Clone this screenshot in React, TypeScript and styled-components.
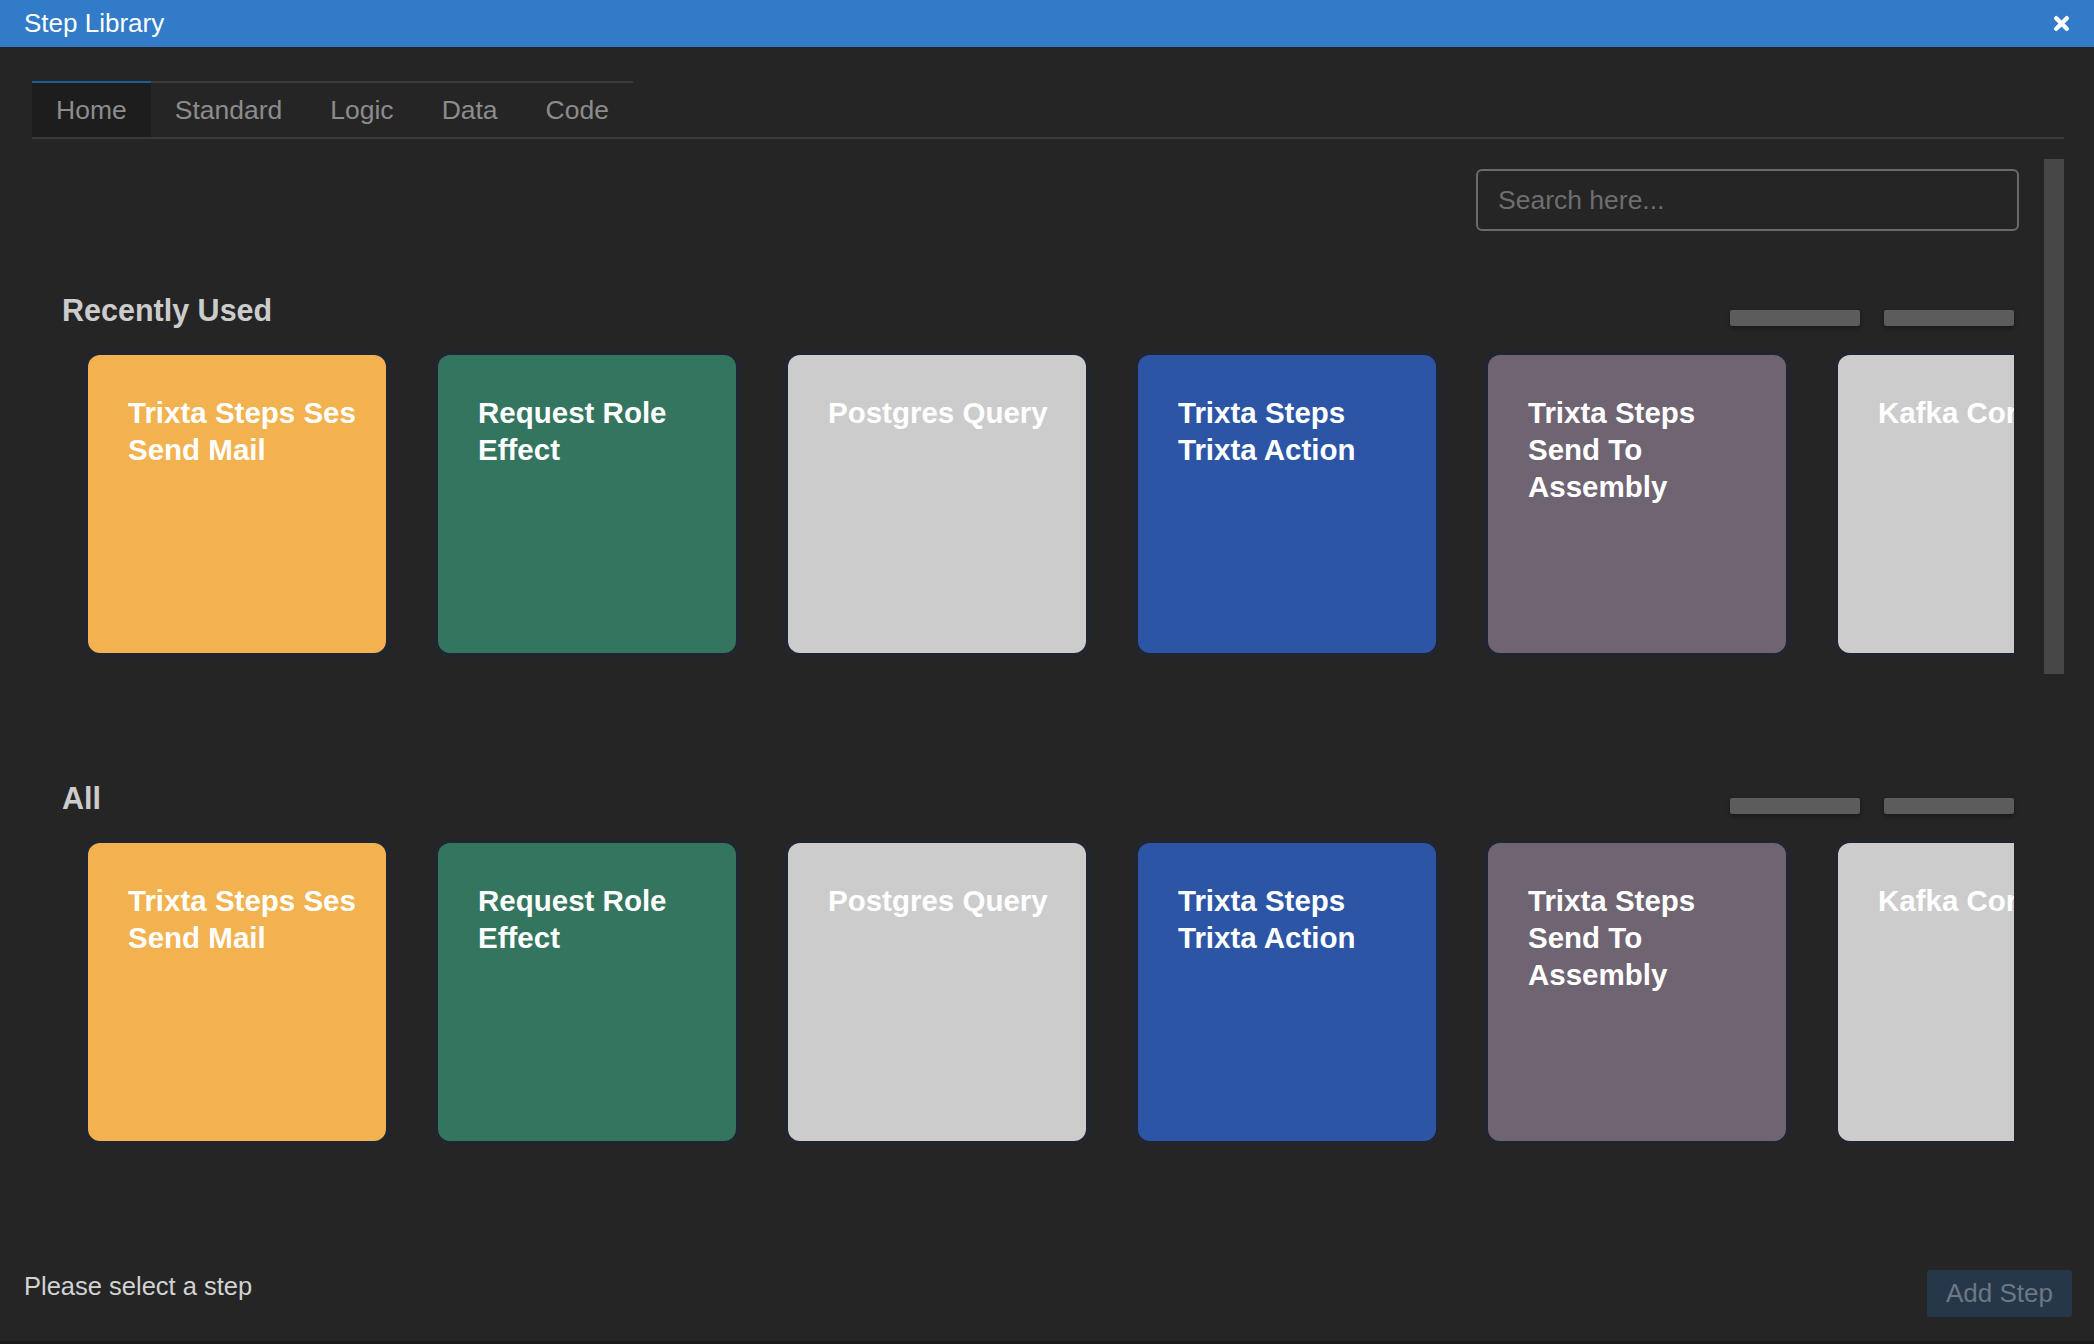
import React from 'react';
import styled, { createGlobalStyle } from 'styled-components';

// Styles
const GlobalStyle = createGlobalStyle`
  html, body {
    margin: 0;
    padding: 0;
    background: #252525;
    font-family: 'Liberation Sans', Arial, Helvetica, sans-serif;
  }
  * {
    box-sizing: border-box;
  }
`;

const Window = styled.div`
  width: 2094px;
  height: 1344px;
  display: flex;
  flex-direction: column;
  background: #252525;
  overflow: hidden;
`;

const TitleBar = styled.div`
  height: 47px;
  flex-shrink: 0;
  background: #317bc8;
  display: flex;
  align-items: center;
  justify-content: space-between;
  padding: 0 24px;
`;

const Title = styled.div`
  color: #ffffff;
  font-size: 26px;
  line-height: 47px;
`;

const CloseButton = styled.button`
  border: none;
  background: none;
  padding: 0;
  width: 17px;
  height: 17px;
  display: flex;
  cursor: pointer;
`;

const Body = styled.div`
  flex: 1;
  display: flex;
  flex-direction: column;
  padding: 34px 30px 0 32px;
`;

const TabBar = styled.div`
  display: flex;
  border-bottom: 2px solid #3a3a3a;
`;

const Tab = styled.div<{ $active?: boolean }>`
  padding: 0 24px;
  height: 56px;
  line-height: 54px;
  font-size: 26.5px;
  color: #8c8c8c;
  border-top: 2px solid ${(p) => (p.$active ? '#1e5a96' : '#3a3a3a')};
  background: ${(p) => (p.$active ? '#1d1d1d' : 'transparent')};
  cursor: pointer;
`;

const Panel = styled.div`
  margin-top: 20px;
  height: 1081px;
  display: flex;
`;

const ScrollContent = styled.div`
  flex: 1;
  overflow: hidden;
  padding-top: 10px;
`;

const ScrollTrack = styled.div`
  width: 20px;
  flex-shrink: 0;
`;

const ScrollThumb = styled.div`
  height: 515px;
  background: #474747;
`;

const SearchRow = styled.div`
  display: flex;
  justify-content: flex-end;
  padding-right: 25px;
`;

const SearchInput = styled.input`
  width: 543px;
  height: 62px;
  border: 2px solid #6a6a6a;
  border-radius: 6px;
  background: transparent;
  padding: 0 20px;
  font-family: inherit;
  font-size: 26.5px;
  color: #dddddd;
  outline: none;
  &::placeholder {
    color: #6e6e6e;
  }
`;

const Section = styled.section`
  padding: 0 30px;
  margin-top: 62px;
  & + & {
    margin-top: 122px;
  }
`;

const SectionHeader = styled.div`
  display: flex;
  align-items: flex-end;
  justify-content: space-between;
  height: 34px;
`;

const SectionTitle = styled.h2`
  margin: 0;
  font-size: 30.5px;
  line-height: 34px;
  font-weight: 700;
  color: #cccccc;
`;

const Arrows = styled.div`
  display: flex;
  gap: 24px;
  margin-bottom: 1px;
`;

const ArrowBar = styled.div`
  width: 130px;
  height: 16px;
  border-radius: 2px;
  background: #5c5c5c;
  box-shadow: 0 2px 4px rgba(0, 0, 0, 0.35);
`;

const Carousel = styled.div`
  margin-top: 22px;
  padding: 6px 0 6px 26px;
  display: flex;
  gap: 52px;
  overflow: hidden;
`;

const Card = styled.div<{ $bg: string }>`
  flex-shrink: 0;
  width: 298px;
  height: 298px;
  border-radius: 12px;
  background: ${(p) => p.$bg};
  box-shadow: 0 0 0 5px #22242e;
  padding: 39px 20px 40px 40px;
  color: #ffffff;
  font-size: 29.5px;
  line-height: 37px;
  font-weight: 700;
  cursor: pointer;
`;

const Footer = styled.div`
  flex: 1;
  display: flex;
  align-items: flex-start;
  justify-content: space-between;
  padding: 30px 22px 0 24px;
`;

const Status = styled.div`
  margin-top: 1px;
  font-size: 25.5px;
  line-height: 30px;
  color: #d2d2d2;
`;

const AddButton = styled.button`
  height: 47px;
  padding: 0 19px;
  border: none;
  border-radius: 3px;
  background: #26374a;
  color: #6c7884;
  font-family: inherit;
  font-size: 26px;
  line-height: 47px;
  cursor: not-allowed;
`;

const BottomStrip = styled.div`
  height: 3px;
  flex-shrink: 0;
  background: #1a1a1a;
`;

const tabs = ['Home', 'Standard', 'Logic', 'Data', 'Code'];

const steps = [
  { name: 'Trixta Steps Ses Send Mail', color: '#f2b24f' },
  { name: 'Request Role Effect', color: '#347560' },
  { name: 'Postgres Query', color: '#cccccc' },
  { name: 'Trixta Steps Trixta Action', color: '#2c55a6' },
  { name: 'Trixta Steps Send To Assembly', color: '#6f6472' },
  { name: 'Kafka Consumer', color: '#cccccc' },
];

const CloseIcon = () => (
  <svg width="17" height="17" viewBox="0 0 17 17">
    <path
      d="M3.2 3.2 L13.8 13.8 M13.8 3.2 L3.2 13.8"
      stroke="#ffffff"
      strokeWidth="4.4"
      strokeLinecap="round"
      fill="none"
    />
  </svg>
);

const StepSection: React.FC<{ title: string }> = ({ title }) => (
  <Section>
    <SectionHeader>
      <SectionTitle>{title}</SectionTitle>
      <Arrows>
        <ArrowBar />
        <ArrowBar />
      </Arrows>
    </SectionHeader>
    <Carousel>
      {steps.map((s) => (
        <Card key={s.name} $bg={s.color}>
          {s.name}
        </Card>
      ))}
    </Carousel>
  </Section>
);

const App: React.FC = () => {
  return (
    <Window>
      <GlobalStyle />
      <TitleBar>
        <Title>Step Library</Title>
        <CloseButton aria-label="Close">
          <CloseIcon />
        </CloseButton>
      </TitleBar>

      <Body>
        <TabBar>
          {tabs.map((t, i) => (
            <Tab key={t} $active={i === 0}>
              {t}
            </Tab>
          ))}
        </TabBar>

        <Panel>
          <ScrollContent>
            <SearchRow>
              <SearchInput placeholder="Search here..." />
            </SearchRow>
            <StepSection title="Recently Used" />
            <StepSection title="All" />
          </ScrollContent>
          <ScrollTrack>
            <ScrollThumb />
          </ScrollTrack>
        </Panel>
      </Body>

      <Footer>
        <Status>Please select a step</Status>
        <AddButton disabled>Add Step</AddButton>
      </Footer>
      <BottomStrip />
    </Window>
  );
};

export default App;
